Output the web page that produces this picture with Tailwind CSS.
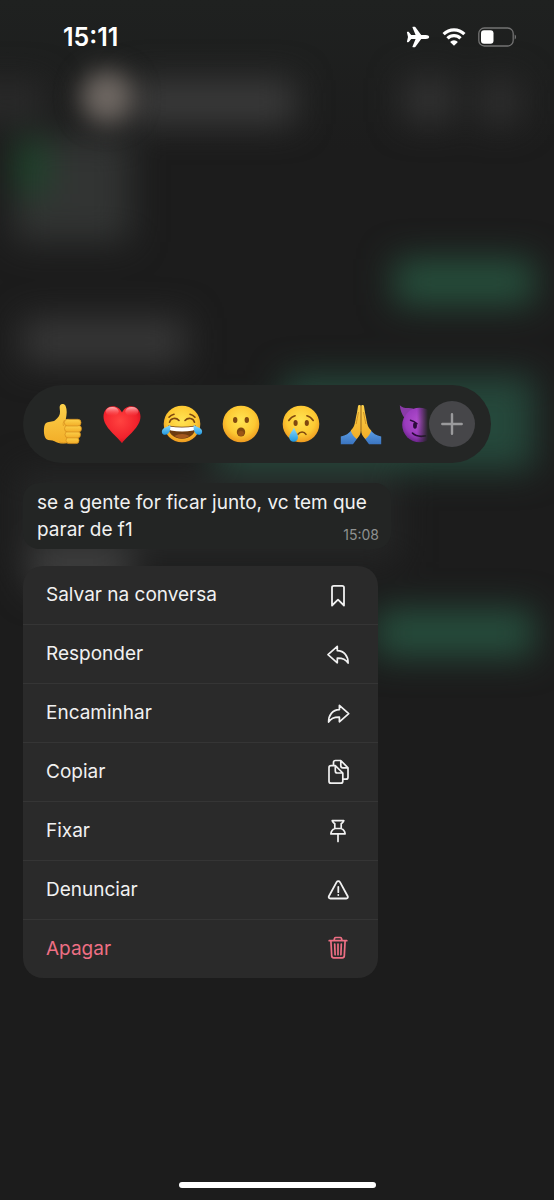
<!DOCTYPE html>
<html lang="pt-BR">
<head>
<meta charset="utf-8">
<meta name="viewport" content="width=device-width, initial-scale=1">
<title>Conversa</title>
<script src="https://cdn.jsdelivr.net/npm/@tailwindcss/browser@4"></script>
</head>
<body class="bg-[#1c1c1c] font-['Inter',sans-serif] text-[#f1f1f1]">
<div class="relative isolate flex min-h-screen flex-col overflow-hidden">

  <!-- Blurred conversation behind the menu -->
  <svg class="absolute inset-0 -z-10 h-full w-full" viewBox="0 0 554 1200" preserveAspectRatio="none" aria-hidden="true">
    <defs>
      <filter id="soft" x="-50%" y="-100%" width="200%" height="300%" color-interpolation-filters="sRGB"><feGaussianBlur stdDeviation="17"/></filter>
      <filter id="round" x="-100%" y="-100%" width="300%" height="300%" color-interpolation-filters="sRGB"><feGaussianBlur stdDeviation="12"/></filter>
      <linearGradient id="top" x1="0" y1="0" x2="0" y2="1"><stop offset="0" stop-color="#1f2120"/><stop offset="1" stop-color="#1c1c1c"/></linearGradient>
    </defs>
    <rect width="554" height="150" fill="url(#top)"/>
    <g filter="url(#soft)">
      <rect x="-30" y="82" width="75" height="38" fill="#2b2b2b"/>
      <rect x="130" y="80" width="165" height="44" fill="#3b3b3b"/>
      <rect x="404" y="78" width="50" height="44" fill="#333333"/>
      <rect x="480" y="80" width="40" height="44" fill="#303030"/>
      <rect x="14" y="136" width="116" height="106" fill="#323433"/>
      <rect x="16" y="140" width="32" height="54" fill="#1d452b"/>
      <rect x="22" y="318" width="164" height="46" fill="#373737"/>
      <rect x="394" y="259" width="140" height="46" fill="#264f3c"/>
      <path d="M284 376h250v94H215v-55h69z" fill="#25483b"/>
      <rect x="18" y="470" width="380" height="92" fill="#252626"/>
      <rect x="30" y="545" width="100" height="44" fill="#404040"/>
      <rect x="375" y="609" width="159" height="48" fill="#264e3d"/>
    </g>
    <circle cx="107" cy="97" r="27" fill="#6e6762" filter="url(#round)"/>
  </svg>

  <header class="flex h-[74px] items-center justify-between pr-[37px] pl-[63px] text-white">
    <time class="text-[25px] leading-7 font-semibold">15:11</time>
    <div class="flex items-center gap-3">
      <svg class="h-[22px] w-6" viewBox="0 0 24 22" fill="#fff" role="img" aria-label="Modo avião">
        <path d="M23.2 11c0-1.100-1.500-2-3.400-2h-4.600L9.300 1.100C9 .8 8.700.7 8.300.7H6.900c-.4 0-.6.4-.4.8L9.600 9H5.200L3 6.200c-.2-.3-.4-.4-.8-.4H1.400c-.3 0-.5.2-.5.5L2 11 .9 15.700c0 .3.2.5.5.5h.8c.4 0 .6-.1.8-.4L5.200 13h4.400l-3.100 7.500c-.2.4 0 .8.4.8h1.400c.4 0 .7-.1 1-.4L15.200 13h4.600c1.900 0 3.400-.9 3.400-2z"/>
      </svg>
      <svg class="h-[18px] w-6" viewBox="0 0 24 18" fill="none" role="img" aria-label="Wi-Fi">
        <path d="M1.600 6.200a14.800 14.800 0 0 1 20.800 0M5.500 10.300a9.200 9.200 0 0 1 13 0" stroke="#fff" stroke-width="3.200"/>
        <path d="M12 17.800l-3.900-3.900a5.500 5.500 0 0 1 7.800 0z" fill="#fff"/>
      </svg>
      <svg class="h-5 w-[39px]" viewBox="0 0 39 20" role="img" aria-label="Bateria">
        <rect x=".8" y="1" width="34.400" height="18" rx="5.500" fill="none" stroke="#737373" stroke-width="1.300"/>
        <rect x="3" y="3.300" width="12.500" height="13.400" rx="3" fill="#fff"/>
        <path d="M36.700 7.500c1.800.8 1.800 4.200 0 5z" fill="#737373"/>
      </svg>
    </div>
  </header>

  <main class="mt-[311px] flex flex-col items-start px-[23px]">

    <section aria-label="Reações" class="relative flex h-[78px] w-full max-w-[468px] items-center rounded-full bg-[#242625] pr-[41px] pl-[10px]">
      <svg width="0" height="0" class="absolute" aria-hidden="true">
        <defs>
          <radialGradient id="face" cx=".5" cy=".4" r=".6"><stop offset="0" stop-color="#ffe453"/><stop offset=".65" stop-color="#fdc933"/><stop offset="1" stop-color="#ee9a20"/></radialGradient>
          <linearGradient id="skin" x1="0" y1="0" x2="0" y2="1"><stop offset="0" stop-color="#fdd24b"/><stop offset="1" stop-color="#f2ad28"/></linearGradient>
          <radialGradient id="heart" cx=".45" cy=".4" r=".65"><stop offset="0" stop-color="#ff4340"/><stop offset=".7" stop-color="#f2222c"/><stop offset="1" stop-color="#c9101f"/></radialGradient>
          <linearGradient id="shine" x1="0" y1="0" x2="0" y2="1"><stop offset="0" stop-color="#ffc1c4" stop-opacity=".9"/><stop offset="1" stop-color="#ff5b5e" stop-opacity="0"/></linearGradient>
          <linearGradient id="tear" x1="0" y1="0" x2="0" y2="1"><stop offset="0" stop-color="#8fdcfb"/><stop offset="1" stop-color="#1f97e0"/></linearGradient>
          <linearGradient id="sleeve" x1="0" y1="0" x2="0" y2="1"><stop offset="0" stop-color="#5d9fe6"/><stop offset="1" stop-color="#3a74c0"/></linearGradient>
          <radialGradient id="devil" cx=".5" cy=".4" r=".6"><stop offset="0" stop-color="#b44fd0"/><stop offset=".7" stop-color="#9a3bbd"/><stop offset="1" stop-color="#6d258c"/></radialGradient>
          <linearGradient id="fade" gradientUnits="userSpaceOnUse" x1="18" y1="0" x2="29" y2="0"><stop offset="0" stop-color="#fff"/><stop offset="1" stop-color="#000"/></linearGradient>
          <mask id="edge" maskUnits="userSpaceOnUse" x="0" y="0" width="42" height="42"><rect width="42" height="42" fill="url(#fade)"/></mask>
        </defs>
      </svg>
      <div class="grid w-full grid-cols-7 justify-items-center">
        <button type="button" aria-label="Curtir">
          <svg class="size-[42px]" viewBox="0 0 42 42">
            <path d="M3.500 20.500c2.500-2.300 7-1 9.600-3.200 3.200-2.600 5.200-5.300 4.900-8.800-.2-3-.8-5 .3-6.400 1.300-1.700 4.200-1.300 5.300.9 1.700 3.600 1.200 8.800.2 13.200h3v23.500c-5 1.500-10.500.8-14.300-1.500-2.400-1.500-6-.4-8.300-2.200C1.300 33 1.300 23 3.500 20.500z" fill="url(#skin)"/>
            <g fill="url(#skin)" stroke="#d48d1d" stroke-width=".7">
              <rect x="24" y="34.200" width="13" height="6.400" rx="3.200"/>
              <rect x="23" y="28.400" width="15.500" height="6.500" rx="3.200"/>
              <rect x="22.500" y="22.400" width="17" height="6.600" rx="3.300"/>
              <rect x="22.300" y="16.300" width="16.700" height="6.700" rx="3.300"/>
            </g>
            <path d="M22.500 17c-1.800 3-1.400 4.600-1 6M26 39.500c-3 .6-6 .4-9-.6" fill="none" stroke="#d9921e" stroke-width=".7"/>
          </svg>
        </button>
        <button type="button" aria-label="Amei">
          <svg class="size-[42px]" viewBox="0 0 42 42">
            <path d="M21 40.200C16 33 2.500 24.500 2.500 13.500c0-6 3.800-10.300 9.200-10.300 4.200 0 7.500 2.300 9.300 6.300 1.800-4 5.100-6.300 9.300-6.300 5.400 0 9.200 4.300 9.200 10.300 0 11-13.500 19.500-18.500 26.700z" fill="url(#heart)"/>
            <ellipse cx="11.200" cy="8.500" rx="6.500" ry="4.500" fill="url(#shine)"/>
            <ellipse cx="30.800" cy="8.500" rx="6.500" ry="4.500" fill="url(#shine)"/>
          </svg>
        </button>
        <button type="button" aria-label="Haha">
          <svg class="size-[42px]" viewBox="0 0 42 42">
            <circle cx="21" cy="21" r="18.300" fill="url(#face)"/>
            <path d="M8.500 19.200c1.200-4.300 6.500-5 9.500-1.700M33.500 19.200c-1.200-4.300-6.500-5-9.500-1.700M8 14.200c1.500-1.800 3-2.600 5-3M34 14.200c-1.500-1.800-3-2.600-5-3" fill="none" stroke="#7d4610" stroke-width="1.600" stroke-linecap="round"/>
            <path d="M7.200 22.500c9 1.600 18.600 1.600 27.600 0 .6 7.500-5.500 13.200-13.800 13.200S6.600 30 7.200 22.500z" fill="#6d3b10"/>
            <path d="M8.200 23.400c8.500 1.500 17 1.500 25.600 0-.1 2-.7 3.300-1.600 4.200-7.400 1.300-15 1.300-22.400 0-.9-.9-1.500-2.200-1.600-4.200z" fill="#fff"/>
            <path d="M13.500 33c4.500-2.800 10.500-2.800 15 0-4.500 3.200-10.500 3.200-15 0z" fill="#a4581e"/>
            <path d="M9.200 22c.8 5.200-1.200 9.800-5.200 9.800-3 0-4-3.300-2.300-5.600C3.200 24.200 6.300 24.300 9.200 22zM32.800 22c-.8 5.200 1.200 9.800 5.200 9.800 3 0 4-3.300 2.300-5.600-1.500-2-4.600-1.900-7.500-4.200z" fill="url(#tear)"/>
          </svg>
        </button>
        <button type="button" aria-label="Uau">
          <svg class="size-[42px]" viewBox="0 0 42 42">
            <circle cx="21" cy="21" r="18.300" fill="url(#face)"/>
            <ellipse cx="15.200" cy="17" rx="2.200" ry="3" fill="#80480f"/><ellipse cx="26.800" cy="17" rx="2.200" ry="3" fill="#80480f"/>
            <ellipse cx="21" cy="29" rx="4.200" ry="4.500" fill="#80480f"/><ellipse cx="21" cy="30.500" rx="2.800" ry="2.400" fill="#9c5516"/>
          </svg>
        </button>
        <button type="button" aria-label="Triste">
          <svg class="size-[42px]" viewBox="0 0 42 42">
            <circle cx="21" cy="21" r="18.300" fill="url(#face)"/>
            <ellipse cx="15.600" cy="20" rx="2.100" ry="3" fill="#80480f"/><ellipse cx="26.800" cy="20" rx="2.100" ry="3" fill="#80480f"/>
            <path d="M8.800 17.500c1.600-2.500 3.600-4.200 6.300-4.800M33.200 17.500c-1.600-2.500-3.600-4.200-6.300-4.800M18 31.300c2-3 6.200-3 8 0" fill="none" stroke="#80480f" stroke-width="1.600" stroke-linecap="round"/>
            <path d="M14 24.500c-1.400 3.700-4.800 6.500-4.800 9.800a4.400 4.400 0 0 0 8.800 0c0-3.300-2.800-6.100-4-9.800z" fill="url(#tear)"/>
          </svg>
        </button>
        <button type="button" aria-label="Obrigado">
          <svg class="size-[42px]" viewBox="0 0 42 42">
            <path d="M.8 33.500c5-.8 8.200-3.300 10.700-6.200l6.500 6.500c-1.500 3-3.300 5.500-5 7.400H.8zM41.200 33.500c-5-.8-8.200-3.300-10.700-6.200L24 33.800c1.500 3 3.300 5.500 5 7.400h12.200z" fill="url(#sleeve)"/>
            <path d="M20.800 3.200c0-1.600-2.500-1.900-2.800 0-.7 5-1.500 8.500-2.300 12.500-1 5.300-1.300 8.500-5 11.800 1 3.500 3.200 6.300 6 8.500 3-3 4.100-5.500 4.100-9z" fill="url(#skin)"/>
            <path d="M21.200 3.200c0-1.600 2.500-1.900 2.800 0 .7 5 1.500 8.500 2.300 12.500 1 5.300 1.300 8.500 5 11.800-1 3.500-3.200 6.300-6 8.500-3-3-4.100-5.500-4.100-9z" fill="url(#skin)"/>
            <path d="M21 3v24M18.400 9c-.6 5-1.700 8.500-2.200 12M23.600 9c.6 5 1.700 8.500 2.200 12" fill="none" stroke="#bd7a18" stroke-width=".7"/>
          </svg>
        </button>
        <button type="button" aria-label="Diabinho">
          <svg class="size-[42px]" viewBox="0 0 42 42">
            <g mask="url(#edge)">
              <path d="M.8 2.200c2 2.300 5.500 3 9 2.800 3.400 0 5 .8 6.400 2.200L5.500 15C3 11.500 1.200 7.500.8 2.200z" fill="#8a3ba8"/>
              <circle cx="20.500" cy="22" r="17.300" fill="url(#devil)"/>
              <path d="M11.500 17.200c2.400.5 4.700 1.700 6.500 3.600" fill="none" stroke="#2b0b3c" stroke-width="1.500" stroke-linecap="round"/>
              <ellipse cx="16" cy="22.500" rx="1.900" ry="3.200" fill="#2b0b3c"/>
              <path d="M13.500 30.200c3 2.800 8 3.600 13 2.600" fill="none" stroke="#2b0b3c" stroke-width="1.700" stroke-linecap="round"/>
            </g>
          </svg>
        </button>
      </div>
      <button type="button" aria-label="Mais reações" class="absolute right-4 grid size-[46px] place-items-center rounded-full bg-[#464649]">
        <svg class="size-[22px]" viewBox="0 0 22 22" stroke="#9a9a9c" stroke-width="2.400" stroke-linecap="round"><path d="M11 1.300v19.400M1.300 11h19.400"/></svg>
      </button>
    </section>

    <article class="mt-5 w-full max-w-[368px] rounded-2xl bg-[#232524] pt-[6px] pr-3 pb-[6px] pl-[14px] text-[19px] leading-[27px]">
      se a gente for ficar junto, vc tem que parar de f1
      <time class="float-right mt-[11px] text-[14px] leading-4 text-[#8f9190]">15:08</time>
    </article>

    <div role="menu" aria-label="Opções da mensagem" class="mt-[17px] flex w-full max-w-[355px] flex-col divide-y divide-[#353535] overflow-hidden rounded-[20px] bg-[#2a2a2a] text-[19px] leading-7">
      <button type="button" role="menuitem" class="flex items-center justify-between py-[15px] pr-[27px] pl-[23px]">Salvar na conversa
        <svg class="size-[26px]" viewBox="0 0 26 26" fill="none" stroke="currentColor" stroke-width="1.800" stroke-linejoin="round" aria-hidden="true"><path d="M7 5.600C7 4.400 7.700 3.800 8.800 3.800h8.400c1.100 0 1.800.6 1.800 1.800v17.900l-6-5.800-6 5.800z"/></svg>
      </button>
      <button type="button" role="menuitem" class="flex items-center justify-between py-[15px] pr-[27px] pl-[23px]">Responder
        <svg class="size-[26px]" viewBox="0 0 26 26" fill="none" stroke="currentColor" stroke-width="1.700" stroke-linejoin="round" aria-hidden="true"><path d="M12.300 5.400 3 13.600l9.300 8.200v-4.600c5-.2 8.200 1 10.800 4.800.1-7-3.800-12-10.800-12.300z"/></svg>
      </button>
      <button type="button" role="menuitem" class="flex items-center justify-between py-[15px] pr-[27px] pl-[23px]">Encaminhar
        <svg class="size-[26px]" viewBox="0 0 26 26" fill="none" stroke="currentColor" stroke-width="1.700" stroke-linejoin="round" aria-hidden="true"><path d="M14.400 5.400l9.300 8.200-9.300 8.200v-4.600c-5-.2-8.200 1-10.800 4.800-.1-7 3.800-12 10.800-12.300z"/></svg>
      </button>
      <button type="button" role="menuitem" class="flex items-center justify-between py-[15px] pr-[27px] pl-[23px]">Copiar
        <svg class="size-[26px]" viewBox="0 0 26 26" fill="none" stroke="currentColor" stroke-width="1.700" stroke-linejoin="round" aria-hidden="true"><path d="M10.300 6.700H6c-1.200 0-2 .8-2 2v13.500c0 1.200.8 2 2 2h9.800c1.200 0 2-.8 2-2v-8.200zM10.300 6.700V12c0 1.200.8 2 2 2h5.500M8.500 6.700V3.500c0-1.200.8-2 2-2h5.300l7.200 7.300v9.400c0 1.200-.8 2-2 2h-3.200M15.800 1.500v5.300c0 1.200.8 2 2 2H23"/></svg>
      </button>
      <button type="button" role="menuitem" class="flex items-center justify-between py-[15px] pr-[27px] pl-[23px]">Fixar
        <svg class="size-[26px]" viewBox="0 0 26 26" fill="none" stroke="currentColor" stroke-width="1.700" stroke-linejoin="round" stroke-linecap="round" aria-hidden="true"><path d="M7.200 2.600h11.600c0 1.600-1.400 2-2.600 3v4.900c2.300 1 3.700 2.800 3.900 5.400H5.900c.2-2.600 1.600-4.400 3.900-5.400V5.600c-1.200-1-2.600-1.400-2.600-3zM9.800 10.500h6.400M13 16v7.500"/></svg>
      </button>
      <button type="button" role="menuitem" class="flex items-center justify-between py-[15px] pr-[27px] pl-[23px]">Denunciar
        <svg class="size-[26px]" viewBox="0 0 26 26" fill="none" stroke="currentColor" stroke-width="1.800" stroke-linejoin="round" stroke-linecap="round" aria-hidden="true"><path d="M11.600 5.100 3.900 19.200c-.6 1.200.1 2.300 1.400 2.300h16c1.300 0 2-1.100 1.400-2.300L15 5.100c-.8-1.300-2.600-1.300-3.400 0zM13.300 10v5.200M13.300 18v.1"/></svg>
      </button>
      <button type="button" role="menuitem" class="flex items-center justify-between py-[15px] pr-[27px] pl-[23px] text-[#ee6f84]">Apagar
        <svg class="size-[26px]" viewBox="0 0 26 26" fill="none" stroke="currentColor" stroke-width="1.700" stroke-linejoin="round" stroke-linecap="round" aria-hidden="true"><path d="M4.200 4.700h17.600M9 4.500l.6-2.200c.2-.5.500-.8 1-.8h4.800c.5 0 .8.300 1 .8l.6 2.200M5.900 4.900l.8 15c.1 1.200.8 1.900 2 1.900h8.600c1.200 0 1.900-.7 2-1.900l.8-15M9.700 8l.4 10.700M13 8v10.700M16.300 8l-.4 10.700"/></svg>
      </button>
    </div>
  </main>

  <div class="mx-auto mt-auto mb-3 h-[6px] w-[197px] rounded-full bg-white"></div>
</div>
</body>
</html>
